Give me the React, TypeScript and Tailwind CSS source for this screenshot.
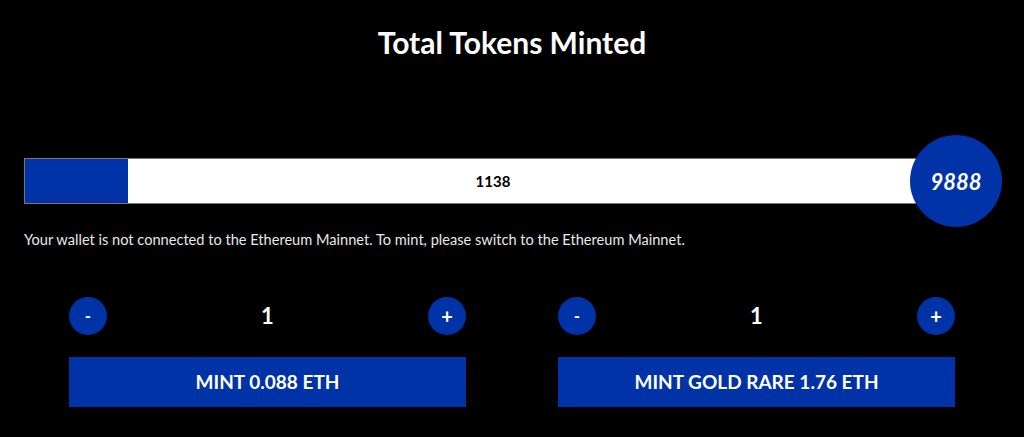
import React from "react";

const font = { fontFamily: "Lato, 'Noto Sans', sans-serif" };

function Stepper({ label }: { label: string }) {
  return (
    <div className="flex w-[397px] flex-col">
      <div className="flex h-[38px] items-center justify-between">
        <div className="flex h-[38px] w-[38px] items-center justify-center rounded-full bg-[#0032a8] text-[17px] font-bold text-white">-</div>
        <div className="text-[22px] font-bold text-white">1</div>
        <div className="flex h-[38px] w-[38px] items-center justify-center rounded-full bg-[#0032a8] text-[20px] font-bold text-white">+</div>
      </div>
      <div className="mt-[22px] flex h-[50px] items-center justify-center bg-[#0032a8] text-[19px] font-bold text-white">
        {label}
      </div>
    </div>
  );
}

export default function App() {
  return (
    <div className="min-h-[437px] w-full bg-black" style={font}>
      <div className="flex justify-center pt-[24px]">
        <h1 className="text-[30px] font-bold leading-[36px] text-white">Total Tokens Minted</h1>
      </div>
      <div className="relative mx-[24px] mt-[98px] h-[46px]">
        <div className="flex h-[46px] w-[938px] border border-[#777] bg-white">
          <div className="h-full w-[103px] bg-[#0032a8]" />
          <div className="flex-1" />
        </div>
        <div className="absolute left-0 top-0 flex h-[46px] w-[938px] items-center justify-center text-[15px] font-bold text-black">1138</div>
        <div className="absolute left-[886px] top-[-23px] flex h-[92px] w-[92px] items-center justify-center rounded-full bg-[#0032a8] text-[22px] font-bold italic text-white">
          9888
        </div>
      </div>
      <p className="ml-[24px] mt-[25px] text-[14.6px] text-[#e8e8e8]">
        Your wallet is not connected to the Ethereum Mainnet. To mint, please switch to the Ethereum Mainnet.
      </p>
      <div className="mt-[46px] flex justify-center gap-[92px]">
        <Stepper label="MINT 0.088 ETH" />
        <Stepper label="MINT GOLD RARE 1.76 ETH" />
      </div>
    </div>
  );
}
